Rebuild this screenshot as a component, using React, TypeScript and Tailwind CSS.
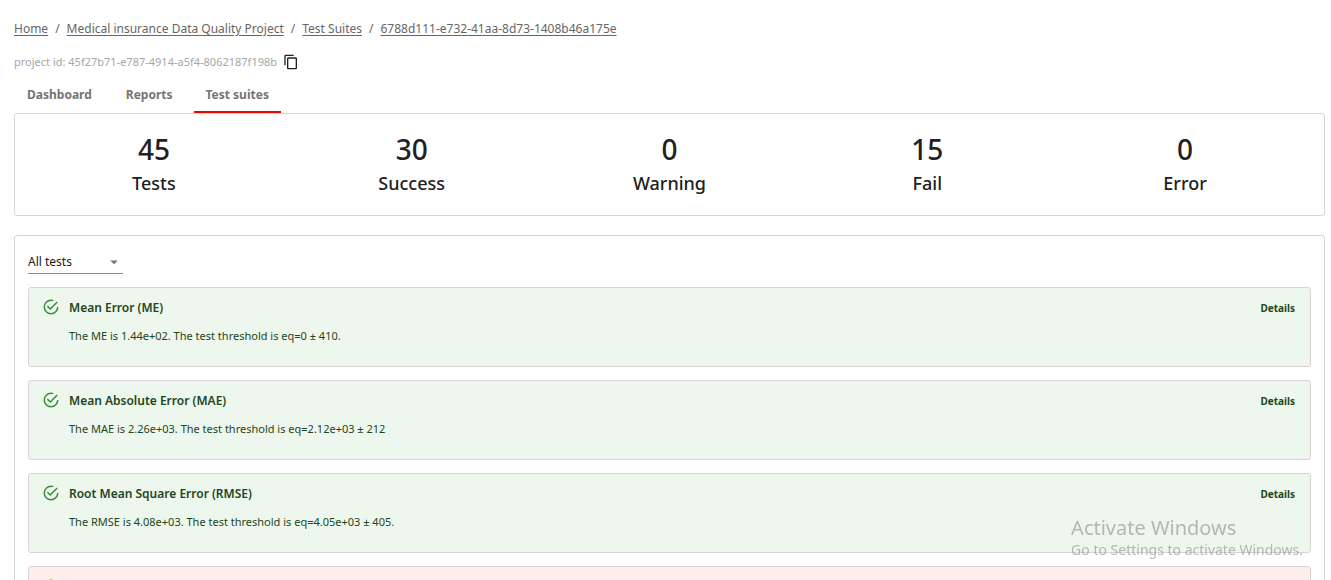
import { Fragment } from "react";

const crumbs = [
  "Home",
  "Medical insurance Data Quality Project",
  "Test Suites",
  "6788d111-e732-41aa-8d73-1408b46a175e",
];

const tabs = ["Dashboard", "Reports", "Test suites"];

const stats = [
  { value: 45, label: "Tests" },
  { value: 30, label: "Success" },
  { value: 0, label: "Warning" },
  { value: 15, label: "Fail" },
  { value: 0, label: "Error" },
];

const results = [
  { title: "Mean Error (ME)", text: "The ME is 1.44e+02. The test threshold is eq=0 ± 410." },
  { title: "Mean Absolute Error (MAE)", text: "The MAE is 2.26e+03. The test threshold is eq=2.12e+03 ± 212" },
  { title: "Root Mean Square Error (RMSE)", text: "The RMSE is 4.08e+03. The test threshold is eq=4.05e+03 ± 405." },
];

function Icon({ path, className }: { path: string; className: string }) {
  return (
    <svg viewBox="0 0 24 24" fill="currentColor" aria-hidden="true" className={className}>
      <path d={path} />
    </svg>
  );
}

const COPY =
  "M16 1H4c-1.1 0-2 .9-2 2v14h2V3h12V1zm3 4H8c-1.1 0-2 .9-2 2v14c0 1.1.9 2 2 2h11c1.1 0 2-.9 2-2V7c0-1.1-.9-2-2-2zm0 16H8V7h11v14z";
const CHECK =
  "M20 12A8 8 0 0 1 12 20A8 8 0 0 1 4 12A8 8 0 0 1 12 4C12.76 4 13.5 4.11 14.2 4.31L15.77 2.74C14.61 2.26 13.34 2 12 2A10 10 0 0 0 2 12A10 10 0 0 0 12 22A10 10 0 0 0 22 12M7.91 10.08L6.5 11.5L11 16L21 6L19.59 4.58L11 13.17L7.91 10.08Z";
const FAIL =
  "M11 15h2v2h-2zm0-8h2v6h-2zm.99-5C6.47 2 2 6.48 2 12s4.47 10 9.99 10C17.52 22 22 17.52 22 12S17.52 2 11.99 2zM12 20c-4.42 0-8-3.58-8-8s3.58-8 8-8 8 3.58 8 8-3.58 8-8 8z";

export default function App() {
  return (
    <div className="h-screen overflow-hidden bg-white pt-[21px] pr-1.5 pl-3.5 font-['Noto_Sans',sans-serif] text-[#212121]">
      <nav aria-label="Breadcrumb" className="flex h-4 items-center text-xs text-[#666]">
        {crumbs.map((crumb, i) => (
          <Fragment key={crumb}>
            {i > 0 && <span className="mx-[7px]">/</span>}
            <a href="#" className="underline underline-offset-2">
              {crumb}
            </a>
          </Fragment>
        ))}
      </nav>

      <div className="mt-[15px] flex h-5 items-center gap-1.5 text-[11px] text-[#a6a6a6]">
        <span>project id: 45f27b71-e787-4914-a5f4-8062187f198b</span>
        <button type="button" aria-label="Copy project id" className="text-[#212121]">
          <Icon path={COPY} className="size-4" />
        </button>
      </div>

      <div role="tablist" className="mt-1 flex h-[37px] gap-2 text-xs text-[#757575]">
        {tabs.map((tab, i) => (
          <button
            key={tab}
            type="button"
            role="tab"
            aria-selected={i === 2}
            className={
              i === 2
                ? "border-b-2 border-[#ed0500] px-3 pt-0.5 font-bold"
                : "border-b-2 border-transparent px-[13px] pt-0.5 font-bold"
            }
          >
            {tab}
          </button>
        ))}
      </div>

      <section className="grid grid-cols-5 rounded-[3px] border border-[#d6d6d6] px-2.5 pt-[15px] pb-[18px] text-center font-medium">
        {stats.map(({ value, label }) => (
          <div key={label}>
            <div className="text-[28px] leading-10">{value}</div>
            <div className="text-lg leading-7">{label}</div>
          </div>
        ))}
      </section>

      <section className="mt-[19px] rounded-[3px] border border-[#d6d6d6] p-[13px]">
        <div className="relative w-[95px] text-[#212121]">
          <select
            aria-label="Filter tests"
            className="block h-[25px] w-full appearance-none border-b border-[#8c8c8c] bg-transparent pt-0.5 text-xs outline-none"
          >
            <option>All tests</option>
          </select>
          <Icon path="M7 10l5 5 5-5z" className="pointer-events-none absolute top-1 right-0 size-[18px] text-[#757575]" />
        </div>

        <div className="mt-[13px] flex flex-col gap-[13px]">
          {results.map(({ title, text }) => (
            <article
              key={title}
              className="flex h-20 items-start rounded-[3px] border border-[#d9d4d1] bg-[#edf7ed] px-[13px] pt-2.5 text-[#1e4620]"
            >
              <Icon path={CHECK} className="size-[18px] shrink-0 text-[#388e3c]" />
              <div className="ml-[9px] grow">
                <h2 className="text-xs leading-5 font-semibold">{title}</h2>
                <p className="mt-2 text-[11px] leading-5">{text}</p>
              </div>
              <button type="button" className="mr-0.5 text-[10px] leading-5 font-bold">
                Details
              </button>
            </article>
          ))}
          <article className="flex h-20 items-start rounded-[3px] border border-[#d9d4d1] bg-[#fdeded] px-[13px] pt-[11px]">
            <Icon path={FAIL} className="size-[18px] shrink-0 text-[#ef5350]" />
          </article>
        </div>
      </section>

      <aside className="pointer-events-none fixed right-7 bottom-5 text-[#8c8c8c]/60">
        <div className="text-xl leading-6">Activate Windows</div>
        <div className="text-sm leading-5">Go to Settings to activate Windows.</div>
      </aside>
    </div>
  );
}
